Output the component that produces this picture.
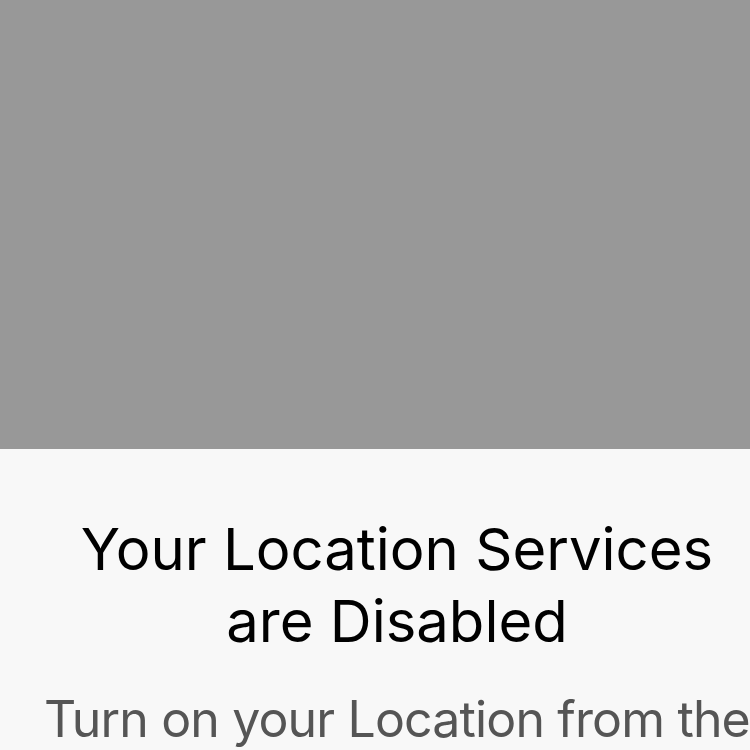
export default function App() {
    return <div className="w-[750px] h-[750px] overflow-hidden bg-[#f8f8f8]" style={{ fontFamily: "Inter, 'Noto Sans', sans-serif" }}>
        <div className="h-[449px] bg-[#989898]"></div>
        <div className="pl-[44px] pt-[64px] text-center">
            <h1 className="text-[58px] leading-[72px] text-black">Your Location Services<br />are Disabled</h1>
            <p className="mt-[32px] text-[50px] leading-[60px] tracking-[-0.85px] text-[#555555] whitespace-nowrap">Turn on your Location from the</p>
        </div>
    </div>
}
